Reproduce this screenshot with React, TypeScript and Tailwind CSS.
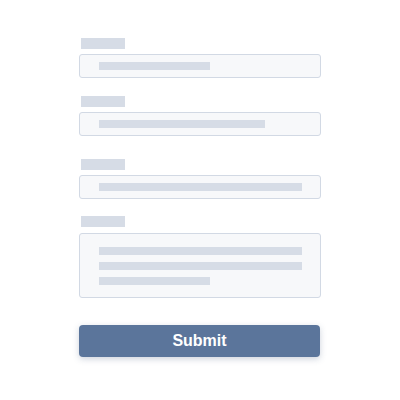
export default function App() {
  return (
    <div className="min-h-screen bg-white" style={{ fontFamily: "'Liberation Sans', Arial, sans-serif" }}>
      <div className="mx-auto w-[242px] pt-[38px]">
        {/* field 1 */}
        <div className="ml-[2px] h-[11px] w-[44px] bg-[#d6dce6]" />
        <div className="mt-[5px] flex h-[24px] items-center rounded-[3px] border border-[#d2d9e4] bg-[#f7f8fa] pl-[19px]">
          <div className="h-[8px] w-[111px] bg-[#d6dce6]" />
        </div>

        {/* field 2 */}
        <div className="ml-[2px] mt-[18px] h-[11px] w-[44px] bg-[#d6dce6]" />
        <div className="mt-[5px] flex h-[24px] items-center rounded-[3px] border border-[#d2d9e4] bg-[#f7f8fa] pl-[19px]">
          <div className="h-[8px] w-[166px] bg-[#d6dce6]" />
        </div>

        {/* field 3 */}
        <div className="ml-[2px] mt-[23px] h-[11px] w-[44px] bg-[#d6dce6]" />
        <div className="mt-[5px] flex h-[24px] items-center rounded-[3px] border border-[#d2d9e4] bg-[#f7f8fa] pl-[19px]">
          <div className="h-[8px] w-[203px] bg-[#d6dce6]" />
        </div>

        {/* textarea */}
        <div className="ml-[2px] mt-[17px] h-[11px] w-[44px] bg-[#d6dce6]" />
        <div className="mt-[6px] flex h-[65px] flex-col gap-[7px] rounded-[3px] border border-[#d2d9e4] bg-[#f7f8fa] pl-[19px] pt-[13px]">
          <div className="h-[8px] w-[203px] bg-[#d6dce6]" />
          <div className="h-[8px] w-[203px] bg-[#d6dce6]" />
          <div className="h-[8px] w-[111px] bg-[#d6dce6]" />
        </div>

        <button className="mt-[27px] flex h-[32px] w-[241px] items-center justify-center rounded-[4px] bg-[#5b759b] text-[16px] font-bold text-white shadow-[0_2px_6px_rgba(60,80,120,0.25)]">
          Submit
        </button>
      </div>
    </div>
  );
}
